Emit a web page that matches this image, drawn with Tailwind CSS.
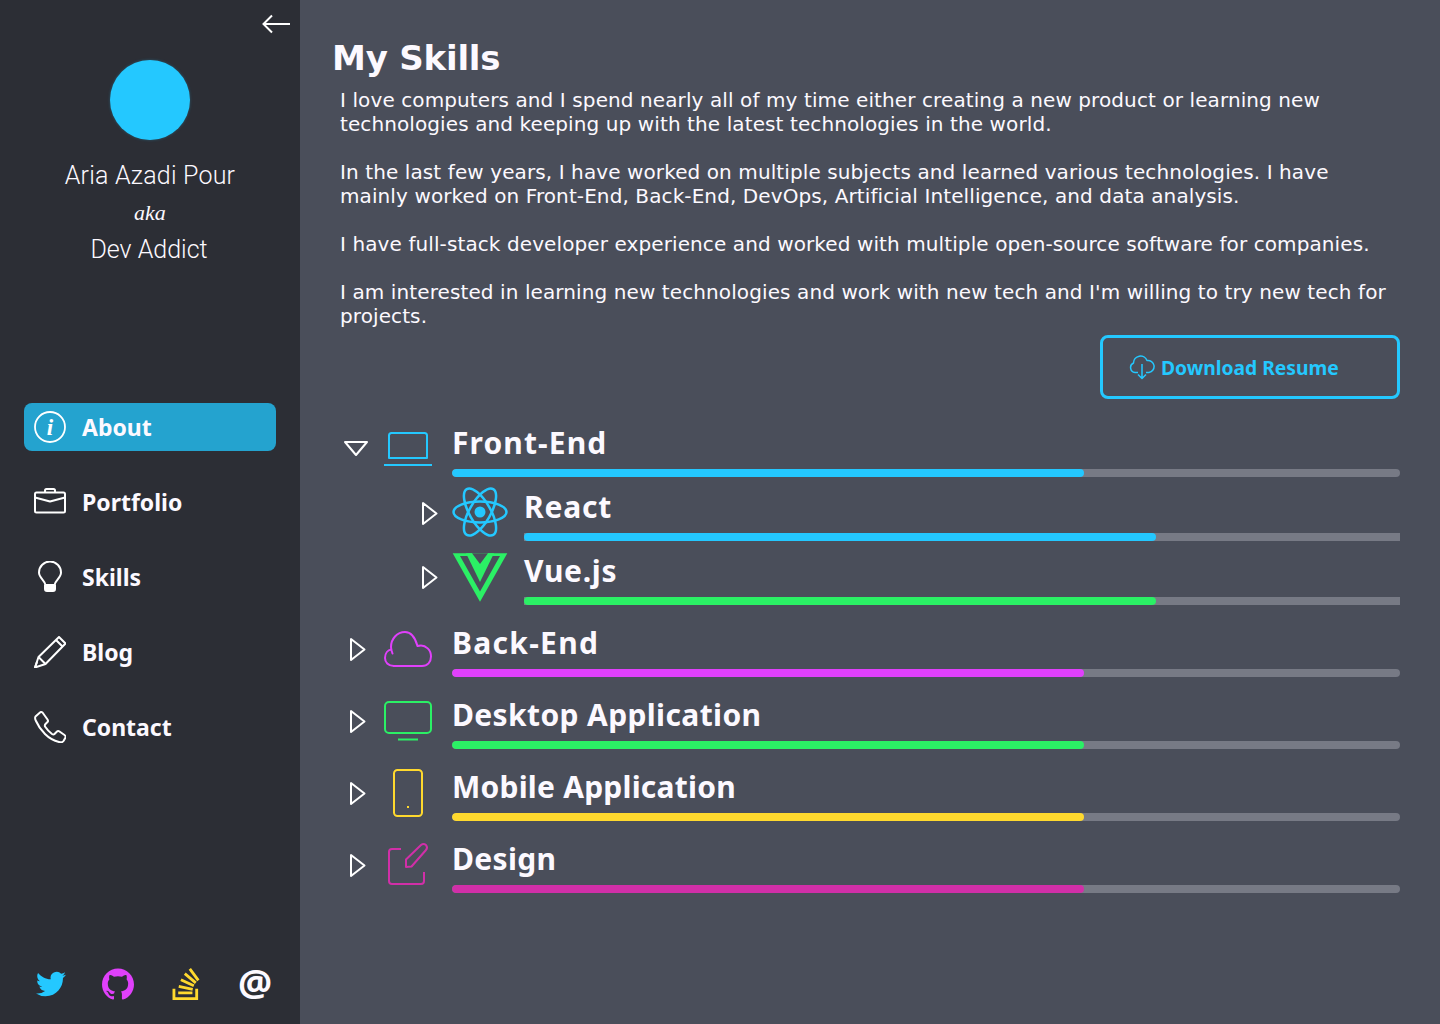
<!DOCTYPE html>
<html lang="en">
<head>
    <meta charset="UTF-8">
    <meta name="viewport" content="width=device-width, initial-scale=1.0">
    <title>Aria Azadi Pour - My Skills</title>
    <script src="https://cdn.jsdelivr.net/npm/@tailwindcss/browser@4"></script>
</head>
<body class="bg-[#4a4e5a] text-[#fcf9ff] font-['DejaVu_Sans',sans-serif] overflow-hidden">
<div class="flex w-[1440px] h-[1024px]">
    <!-- Sidebar -->
    <aside class="w-[300px] h-full bg-[#2c2e35] flex flex-col px-6">
        <div class="flex justify-end h-[60px] -mr-[14px] pt-[14px]">
            <svg class="w-[28px] h-[20px]" viewBox="0 0 28 20" fill="none" stroke="white" stroke-width="2"><path d="M28 10H1.500M10 1.500 1.500 10l8.500 8.500"/></svg>
        </div>
        <div class="w-20 h-20 rounded-full bg-[#24c8ff] mx-auto shadow-[0_0_3px_rgba(36,200,255,0.3)] shrink-0"></div>
        <div class="mt-5 text-center font-['Roboto',sans-serif] font-light text-[25px] leading-[32px] h-[243px]">
            <p class="tracking-[0.2px]">Aria Azadi Pour</p>
            <p class="font-['Liberation_Serif',serif] italic font-normal text-[22px] leading-[42px]">aka</p>
            <p class="-ml-[2px]">Dev Addict</p>
        </div>
        <!-- Nav -->
        <nav class="flex flex-col gap-[27px] font-['Noto_Sans',sans-serif] font-bold text-[23px]">
            <a class="h-12 rounded-lg bg-[#24a3cf] flex items-center gap-4 px-[10px]">
                <svg class="w-8 h-8 shrink-0" viewBox="0 0 32 32" fill="none" stroke="white" stroke-width="1.800"><circle cx="16" cy="16" r="15"/><text x="16" y="24" text-anchor="middle" font-family="Liberation Serif" font-style="italic" font-size="23" fill="white" stroke="none">i</text></svg>
                <span class="pt-[1px]">About</span>
            </a>
            <a class="h-12 flex items-center gap-4 px-[10px]">
                <svg class="w-8 h-8 shrink-0" viewBox="0 0 32 32" fill="none" stroke="white" stroke-width="2" stroke-linejoin="round"><rect x="1" y="6.500" width="30" height="20" rx="1.500"/><path d="M11 6.500V4.500Q11 3 12.500 3h7Q21 3 21 4.500V6.500M1 11.500l15 4 15-4"/></svg>
                <span class="pt-[1px]">Portfolio</span>
            </a>
            <a class="h-12 flex items-center gap-4 px-[10px]">
                <svg class="w-8 h-8 shrink-0" viewBox="0 0 32 32" fill="none" stroke="white" stroke-width="2"><path d="M11.500 24C11 19.500 5 17 5 11.500a11 11 0 0 1 22 0C27 17 21 19.500 20.500 24z"/><path d="M11 24.500h10v3.500q0 2-2 2h-6q-2 0-2-2z" fill="white"/></svg>
                <span class="pt-[1px]">Skills</span>
            </a>
            <a class="h-12 flex items-center gap-4 px-[10px]">
                <svg class="w-8 h-8 shrink-0" viewBox="0 0 32 32" fill="none" stroke="white" stroke-width="2" stroke-linejoin="round"><path d="M1 31.500 4.500 21 25 1l6.500 6.500L11.500 28z"/><path d="M4.500 21l7 7M22 4l6.500 6.500M1 31.500 3 26"/></svg>
                <span class="pt-[1px]">Blog</span>
            </a>
            <a class="h-12 flex items-center gap-4 px-[10px]">
                <svg class="w-8 h-8 shrink-0" viewBox="0 0 32 32" fill="none" stroke="white" stroke-width="2" stroke-linejoin="round"><path d="M6 1.500 1.500 5.500Q0.500 7 2 10 5 17 11 23q6 6 14 8 3 1 4.500-1l2-3.500q.5-1.500-1-2.500l-5-3.500q-1.500-1-2.500 0l-2.500 2.500q-1 1-2.500 0-4-3-7-7.500-.5-1.500.5-2.500l2-2q1-1 0-2.500L8.500 1.500Q7 .5 6 1.500z"/></svg>
                <span class="pt-[1px]">Contact</span>
            </a>
        </nav>
        <!-- Social -->
        <div class="mt-auto mb-[24px] flex justify-between items-center pl-[10px] pr-[6px] h-8">
            <svg class="w-8 h-8 pl-[2px]" viewBox="0 0 24 24" fill="#24c8ff"><path d="M23.953 4.57a10 10 0 01-2.825.775 4.958 4.958 0 002.163-2.723c-.951.555-2.005.959-3.127 1.184a4.92 4.92 0 00-8.384 4.482C7.69 8.095 4.067 6.13 1.64 3.162a4.822 4.822 0 00-.666 2.475c0 1.71.87 3.213 2.188 4.096a4.904 4.904 0 01-2.228-.616v.06a4.923 4.923 0 003.946 4.827 4.996 4.996 0 01-2.212.085 4.936 4.936 0 004.604 3.417 9.867 9.867 0 01-6.102 2.105c-.39 0-.779-.023-1.17-.067a13.995 13.995 0 007.557 2.209c9.053 0 13.998-7.496 13.998-13.985 0-.21 0-.42-.015-.63A9.935 9.935 0 0024 4.59z"/></svg>
            <svg class="w-8 h-8" viewBox="0 0 24 24" fill="#e040fb"><path d="M12 .297c-6.63 0-12 5.373-12 12 0 5.303 3.438 9.8 8.205 11.385.6.113.82-.258.82-.577 0-.285-.01-1.04-.015-2.04-3.338.724-4.042-1.61-4.042-1.61C4.422 18.07 3.633 17.7 3.633 17.7c-1.087-.744.084-.729.084-.729 1.205.084 1.838 1.236 1.838 1.236 1.07 1.835 2.809 1.305 3.495.998.108-.776.417-1.305.76-1.605-2.665-.3-5.466-1.332-5.466-5.93 0-1.31.465-2.38 1.235-3.22-.135-.303-.54-1.523.105-3.176 0 0 1.005-.322 3.3 1.23.96-.267 1.98-.399 3-.405 1.02.006 2.04.138 3 .405 2.28-1.552 3.285-1.23 3.285-1.23.645 1.653.24 2.873.12 3.176.765.84 1.23 1.91 1.23 3.22 0 4.61-2.805 5.625-5.475 5.92.42.36.81 1.096.81 2.22 0 1.606-.015 2.896-.015 3.286 0 .315.21.69.825.57C20.565 22.092 24 17.592 24 12.297c0-6.627-5.373-12-12-12"/></svg>
            <svg class="w-8 h-8" viewBox="0 0 24 24" fill="#ffd92e"><path d="M15.725 0l-1.72 1.277 6.39 8.588 1.716-1.277L15.725 0zm-3.94 3.418l-1.369 1.644 8.225 6.85 1.369-1.644-8.225-6.85zm-3.15 4.465l-.905 1.94 9.702 4.517.904-1.94-9.701-4.517zm-1.85 4.86l-.44 2.093 10.473 2.201.44-2.092-10.473-2.203zM1.89 15.47V24h19.19v-8.53h-2.133v6.397H4.021v-6.396H1.89zm4.265 2.133v2.13h10.66v-2.13H6.154Z"/></svg>
            <span class="w-8 text-center text-[38px] leading-8 font-bold font-['Noto_Sans',sans-serif] -mt-[4px]">@</span>
        </div>
    </aside>

    <!-- Main -->
    <main class="flex-1 pl-[32px] pr-10 pt-[34px]">
        <h1 class="font-bold text-[34px] leading-[48px] tracking-[-0.2px]">My Skills</h1>
        <div class="pl-[8px] text-[20px] leading-[24px] tracking-[0.1px] mt-[6px] space-y-6">
            <p>I love computers and I spend nearly all of my time either creating a new product or learning new technologies and keeping up with the latest technologies in the world.</p>
            <p>In the last few years, I have worked on multiple subjects and learned various technologies. I have mainly worked on Front-End, Back-End, DevOps, Artificial Intelligence, and data analysis.</p>
            <p>I have full-stack developer experience and worked with multiple open-source software for companies.</p>
            <p>I am interested in learning new technologies and work with new tech and I'm willing to try new tech for projects.</p>
        </div>
        <div class="flex justify-end mt-[7px]">
            <a class="w-[300px] h-16 border-[3px] border-[#24c8ff] rounded-lg text-[#24c8ff] flex items-center gap-[6px] pl-[26px] font-['Noto_Sans',sans-serif] font-bold text-[19.25px]">
                <svg class="w-[26px] h-[26px]" viewBox="0 0 26 26" fill="none" stroke="#24c8ff" stroke-width="1.500" stroke-linejoin="round"><path d="M9 18.500H6A5 5 0 0 1 4.500 9 7 7 0 0 1 18 6.500 5.800 5.800 0 0 1 20 18.500h-3M13 10v14M9 20.500l4 4 4-4"/></svg>
                <span class="pt-[2px]">Download Resume</span>
            </a>
        </div>

        <!-- Skills -->
        <div class="flex flex-col gap-2 mt-[14px] ml-[8px] font-['Noto_Sans',sans-serif] font-bold">
            <div class="flex items-end h-16 pb-1">
                <div class="w-8 h-12 flex items-center justify-center mr-3">
                    <svg class="w-8 h-8" viewBox="0 0 32 32" fill="none" stroke="white" stroke-width="2" stroke-linejoin="round"><path d="M5 9h22L16 22z"/></svg>
                </div>
                <svg class="w-12 h-12 shrink-0 mr-5" viewBox="0 0 48 48" fill="none" stroke="#24c8ff" stroke-width="2"><path d="M5 33V10.500Q5 8 7.500 8h33Q43 8 43 10.500V33z" stroke-linejoin="round"/><path d="M0 40h48"/></svg>
                <div class="flex-1 -mb-1">
                    <p class="text-[30px] leading-[44px] mb-[4px] tracking-[1.1px]">Front-End</p>
                    <div class="h-2 bg-[#777a85] rounded-full overflow-hidden"><div class="h-full w-[632px] bg-[#24c8ff] rounded-full"></div></div>
                </div>
            </div>
            <div class="flex items-end h-14 ml-[72px]">
                <div class="w-8 h-14 flex items-center justify-center mr-2">
                    <svg class="w-8 h-8" viewBox="0 0 32 32" fill="none" stroke="white" stroke-width="2" stroke-linejoin="round"><path d="M11 6v21l13.500-10.500z"/></svg>
                </div>
                <svg class="w-14 h-14 shrink-0 mr-4" viewBox="0 0 56 56" fill="none" stroke="#24c8ff" stroke-width="2.500"><ellipse cx="28" cy="27" rx="26.500" ry="10.500"/><ellipse cx="28" cy="27" rx="26.500" ry="10.500" transform="rotate(60 28 27)"/><ellipse cx="28" cy="27" rx="26.500" ry="10.500" transform="rotate(120 28 27)"/><circle cx="28" cy="27" r="5.500" fill="#24c8ff" stroke="none"/></svg>
                <div class="flex-1">
                    <p class="text-[30px] leading-[44px] mb-[4px] tracking-[0.8px]">React</p>
                    <div class="h-2 bg-[#777a85] overflow-hidden"><div class="h-full w-[632px] bg-[#24c8ff] rounded-full"></div></div>
                </div>
            </div>
            <div class="flex items-end h-14 ml-[72px]">
                <div class="w-8 h-14 flex items-center justify-center mr-2">
                    <svg class="w-8 h-8" viewBox="0 0 32 32" fill="none" stroke="white" stroke-width="2" stroke-linejoin="round"><path d="M11 6v21l13.500-10.500z"/></svg>
                </div>
                <svg class="w-14 h-14 shrink-0 mr-4" viewBox="0 0 56 56"><path d="M.7 4.300h54.600L28 52.700z" fill="#2bf065"/><path d="M8 7h40L28 42.500z" fill="#4a4e5a"/><path d="M14 4.300h28L28 33z" fill="#2bf065"/><path d="M20 4.300h16L28 15z" fill="#4a4e5a"/></svg>
                <div class="flex-1">
                    <p class="text-[30px] leading-[44px] mb-[4px] tracking-[0.7px]">Vue.js</p>
                    <div class="h-2 bg-[#777a85] overflow-hidden"><div class="h-full w-[632px] bg-[#2bf065] rounded-full"></div></div>
                </div>
            </div>
            <div class="flex items-end h-16 pb-1">
                <div class="w-8 h-12 flex items-center justify-center mr-3">
                    <svg class="w-8 h-8" viewBox="0 0 32 32" fill="none" stroke="white" stroke-width="2" stroke-linejoin="round"><path d="M11 6v21l13.500-10.500z"/></svg>
                </div>
                <svg class="w-12 h-12 shrink-0 mr-5" viewBox="0 0 48 48" fill="none" stroke="#e040fb" stroke-width="2" stroke-linecap="round" stroke-linejoin="round"><path d="M10 41h28c5.500 0 9-4 9-9.500 0-7-5.500-11-10-11-1 0-2.500 0-3.500.5C31 12 27 7 21 7c-8 0-14 7-14 15 0 2 .5 4 1.500 6.500"/><path d="M10 41C4 41 1 37 1 33c0-5 3-8 6.200-8.500"/></svg>
                <div class="flex-1 -mb-1">
                    <p class="text-[30px] leading-[44px] mb-[4px] tracking-[1.3px]">Back-End</p>
                    <div class="h-2 bg-[#777a85] rounded-full overflow-hidden"><div class="h-full w-[632px] bg-[#e040fb] rounded-full"></div></div>
                </div>
            </div>
            <div class="flex items-end h-16 pb-1">
                <div class="w-8 h-12 flex items-center justify-center mr-3">
                    <svg class="w-8 h-8" viewBox="0 0 32 32" fill="none" stroke="white" stroke-width="2" stroke-linejoin="round"><path d="M11 6v21l13.500-10.500z"/></svg>
                </div>
                <svg class="w-12 h-12 shrink-0 mr-5" viewBox="0 0 48 48" fill="none" stroke="#2bf065" stroke-width="2"><rect x="1" y="5" width="46" height="31" rx="4"/><path d="M14 42.500h20"/></svg>
                <div class="flex-1 -mb-1">
                    <p class="text-[30px] leading-[44px] mb-[4px] tracking-[0.37px]">Desktop Application</p>
                    <div class="h-2 bg-[#777a85] rounded-full overflow-hidden"><div class="h-full w-[632px] bg-[#2bf065] rounded-full"></div></div>
                </div>
            </div>
            <div class="flex items-end h-16 pb-1">
                <div class="w-8 h-12 flex items-center justify-center mr-3">
                    <svg class="w-8 h-8" viewBox="0 0 32 32" fill="none" stroke="white" stroke-width="2" stroke-linejoin="round"><path d="M11 6v21l13.500-10.500z"/></svg>
                </div>
                <svg class="w-12 h-12 shrink-0 mr-5" viewBox="0 0 48 48" fill="none" stroke="#ffd92e" stroke-width="2"><rect x="10" y="1" width="28" height="46" rx="3.500"/><path d="M23 38h2"/></svg>
                <div class="flex-1 -mb-1">
                    <p class="text-[30px] leading-[44px] mb-[4px] tracking-[0.22px]">Mobile Application</p>
                    <div class="h-2 bg-[#777a85] rounded-full overflow-hidden"><div class="h-full w-[632px] bg-[#ffd92e] rounded-full"></div></div>
                </div>
            </div>
            <div class="flex items-end h-16 pb-1">
                <div class="w-8 h-12 flex items-center justify-center mr-3">
                    <svg class="w-8 h-8" viewBox="0 0 32 32" fill="none" stroke="white" stroke-width="2" stroke-linejoin="round"><path d="M11 6v21l13.500-10.500z"/></svg>
                </div>
                <svg class="w-12 h-12 shrink-0 mr-5" viewBox="0 0 48 48" fill="none" stroke="#d12fa8" stroke-width="2" stroke-linejoin="round"><path d="M17 8H8Q5 8 5 11v29q0 3 3 3h29q3 0 3-3v-9"/><path d="M22 26V18.500L37 4q2.500-2 5 0 2 2.500 0 5L27.500 25.500z"/></svg>
                <div class="flex-1 -mb-1">
                    <p class="text-[30px] leading-[44px] mb-[4px] tracking-[0.35px]">Design</p>
                    <div class="h-2 bg-[#777a85] rounded-full overflow-hidden"><div class="h-full w-[632px] bg-[#d12fa8] rounded-full"></div></div>
                </div>
            </div>
        </div>
    </main>
</div>
</body>
</html>
